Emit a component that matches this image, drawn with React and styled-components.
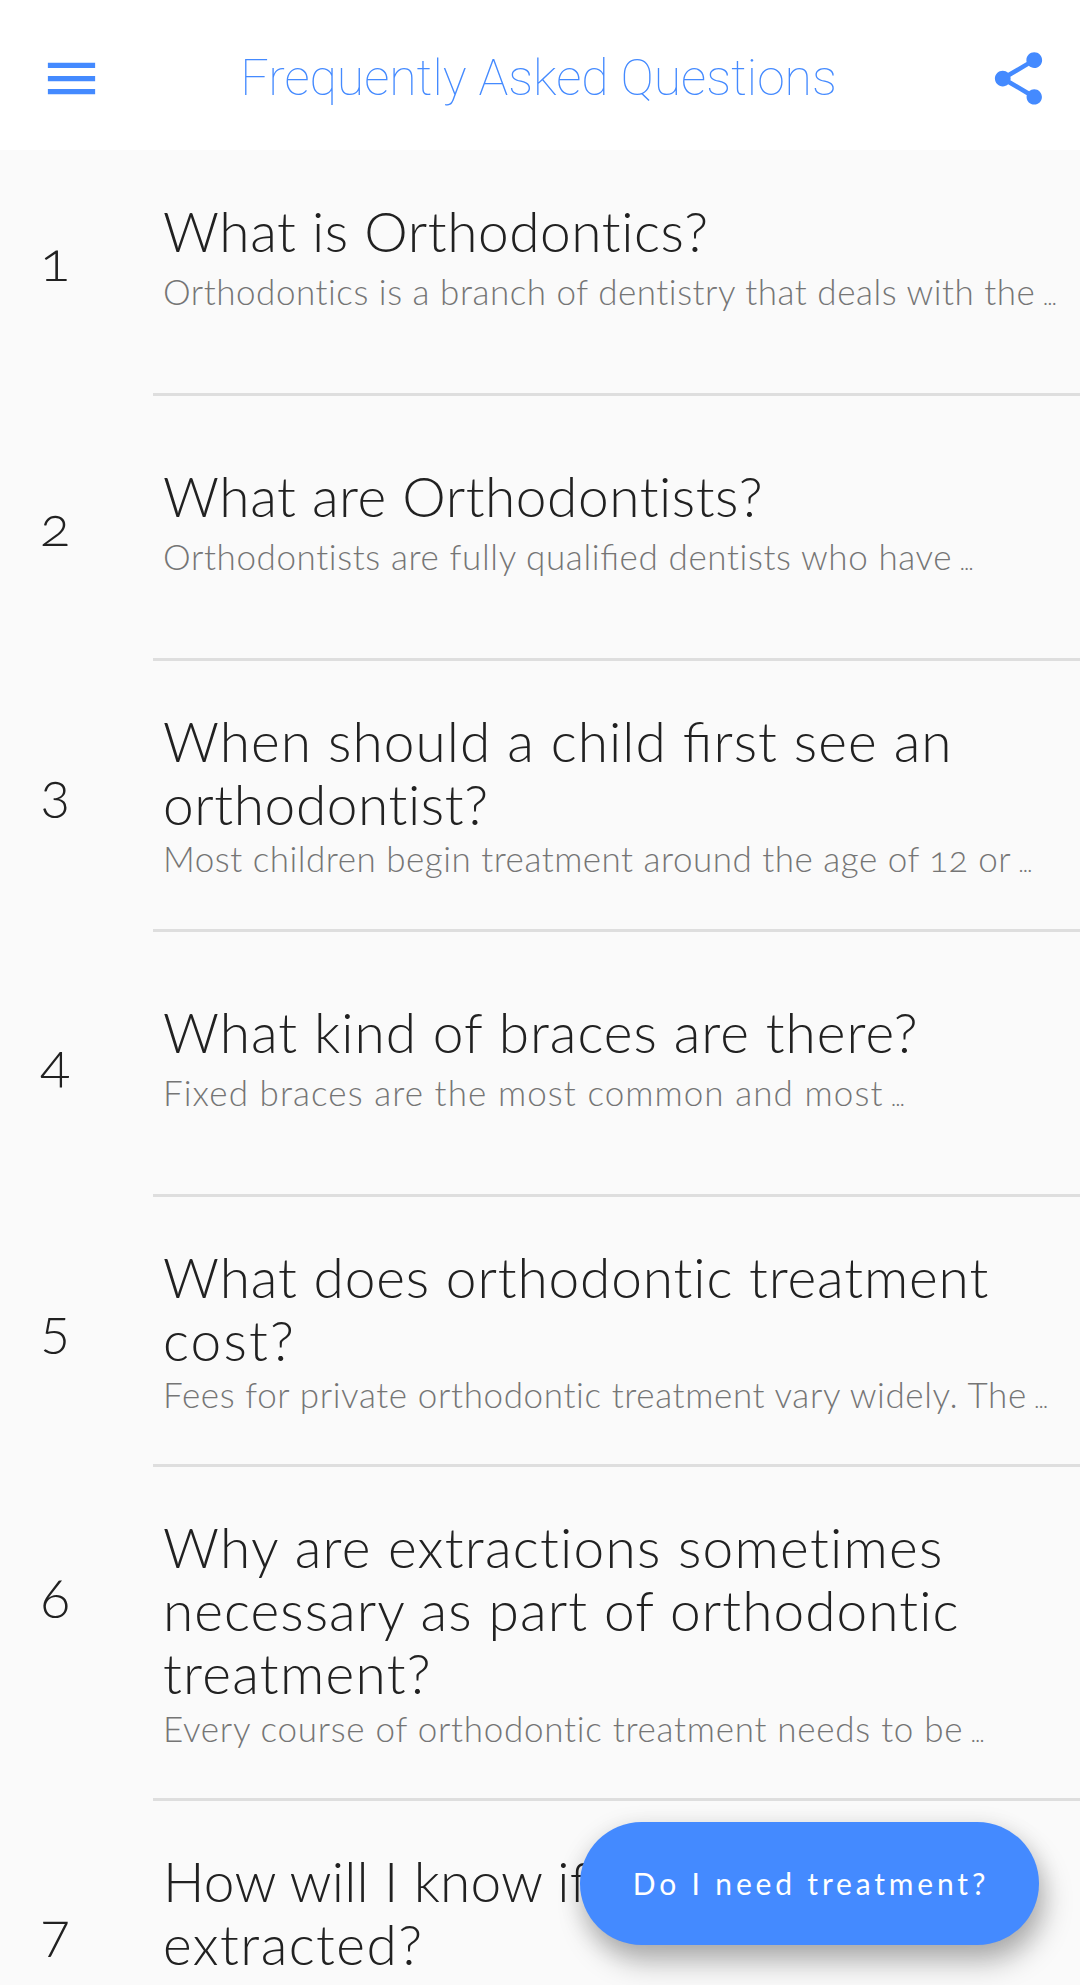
import React from 'react';
import styled, { createGlobalStyle } from 'styled-components';

const GlobalStyle = createGlobalStyle`
  body {
    margin: 0;
    background: #fafafa;
    font-family: Lato, "Liberation Sans", sans-serif;
  }
`;

const Screen = styled.div`
  width: 1080px;
  height: 1985px;
  overflow: hidden;
  position: relative;
  background: #fafafa;
`;

const Header = styled.header`
  position: relative;
  z-index: 1;
  box-sizing: border-box;
  height: 150px;
  padding: 6px 30px 0 40px;
  display: flex;
  align-items: center;
  justify-content: space-between;
  background: #fff;
  color: #448aff;
`;

const Title = styled.h1`
  margin: 0 13px 0 0;
  font: 100 49.9px/60px Roboto, sans-serif;
  white-space: nowrap;
`;

const IconButton = styled.button`
  width: 63px;
  height: 63px;
  padding: 0;
  border: 0;
  background: none;
  color: inherit;

  svg {
    display: block;
    width: 63px;
    height: 63px;
    fill: currentColor;
  }
`;

const List = styled.ol`
  margin: -19px 0 0;
  padding: 0;
  list-style: none;
`;

const Row = styled.li`
  display: flex;
  height: ${(p) => p.$height}px;
`;

const Index = styled.span`
  box-sizing: border-box;
  width: 153px;
  flex: none;
  padding: ${(p) => (p.$single ? 95 : 96)}px 0 0 40px;
  font-size: 56px;
  font-weight: 300;
  line-height: 67px;
  font-feature-settings: "onum";
  color: #212121;
`;

const Body = styled.div`
  box-sizing: border-box;
  flex: 1;
  padding: ${(p) => (p.$single ? 69 : 49)}px 0 0 10px;
  border-bottom: 3px solid #dedede;
`;

const Question = styled.h2`
  margin: 0 0 ${(p) => (p.$single ? 8 : 2)}px;
  font-size: 55px;
  font-weight: 300;
  line-height: 63.2px;
  color: #212121;
`;

const Line = styled.span`
  display: block;
  width: max-content;
  white-space: pre;
  letter-spacing: ${(p) => p.$track}px;
`;

const Answer = styled.p`
  margin: 0;
  display: flex;
  align-items: baseline;
  font-size: 35px;
  font-weight: 300;
  line-height: 40px;
  white-space: pre;
  color: #757575;
`;

const Snippet = styled.span`
  letter-spacing: ${(p) => p.$track}px;
  font-feature-settings: "onum";
`;

const Ligature = styled.i`
  font-style: normal;
  font-feature-settings: "liga";
`;

const More = styled.span`
  margin-left: 8px;
  font-size: 17px;
  font-weight: 400;
`;

const Fab = styled.button`
  position: absolute;
  right: 41px;
  bottom: 40px;
  width: 459px;
  height: 123px;
  padding: 0 0 2px 3px;
  border: 0;
  border-radius: 62px;
  background: #448aff;
  color: #fff;
  font: 400 30px/36px Lato, sans-serif;
  letter-spacing: 3.82px;
  white-space: nowrap;
  box-shadow: 6px 18px 28px rgba(0, 0, 0, 0.25), 0 5px 24px rgba(0, 0, 0, 0.13);
`;

const FAQS = [
  {
    height: 265,
    lines: [['What is Orthodontics?', 0.57]],
    answer: 'Orthodontics is a branch of dentistry that deals with the',
    track: 0.53,
  },
  {
    height: 265,
    lines: [['What are Orthodontists?', 0.55]],
    answer: 'Orthodontists are fully qualified dentists who have',
    track: 0.62,
  },
  {
    height: 271,
    lines: [['When should a child first see an', 1.03], ['orthodontist?', 0.6]],
    answer: 'Most children begin treatment around the age of 12 or',
    track: 0.51,
  },
  {
    height: 265,
    lines: [['What kind of braces are there?', 0.98]],
    answer: 'Fixed braces are the most common and most',
    track: 1.08,
  },
  {
    height: 270,
    lines: [['What does orthodontic treatment', 0.87], ['cost?', 2.2]],
    answer: 'Fees for private orthodontic treatment vary widely. The',
    track: 0.63,
  },
  {
    height: 334,
    lines: [
      ['Why are extractions sometimes', 1.27],
      ['necessary as part of orthodontic', 1.05],
      ['treatment?', 1.28],
    ],
    answer: 'Every course of orthodontic treatment needs to be',
    track: 0.73,
  },
  {
    height: 271,
    lines: [['How will I know if', 0.2], ['extracted?', 1.44]],
    answer: '',
    track: 0,
  },
];

// Letter-spacing switches ligatures off, so "fi" is joined explicitly.
const withLigatures = (text) =>
  text.split(/(fi)/).map((part, i) => (part === 'fi' ? <Ligature key={i}>fi</Ligature> : part));

function FaqRow({ number, faq }) {
  const single = faq.lines.length === 1;
  return (
    <Row $height={faq.height}>
      <Index $single={single}>{number}</Index>
      <Body $single={single}>
        <Question $single={single}>
          {faq.lines.map(([text, track]) => (
            <Line key={text} $track={track}>{withLigatures(text)}</Line>
          ))}
        </Question>
        {faq.answer && (
          <Answer>
            <Snippet $track={faq.track}>{withLigatures(faq.answer)}</Snippet>
            <More>…</More>
          </Answer>
        )}
      </Body>
    </Row>
  );
}

export default function App() {
  return (
    <Screen>
      <GlobalStyle />
      <Header>
        <IconButton aria-label="Menu">
          <svg viewBox="0 0 24 24"><path d="M3 18h18v-2H3v2zm0-5h18v-2H3v2zm0-7v2h18V6H3z" /></svg>
        </IconButton>
        <Title>Frequently Asked Questions</Title>
        <IconButton aria-label="Share">
          <svg viewBox="0 0 24 24"><path d="M18 16.08c-.76 0-1.44.3-1.96.77L8.91 12.7c.05-.23.09-.46.09-.7s-.04-.47-.09-.7l7.05-4.11c.54.5 1.25.81 2.04.81 1.66 0 3-1.34 3-3s-1.34-3-3-3-3 1.34-3 3c0 .24.04.47.09.7L8.04 9.81C7.5 9.31 6.79 9 6 9c-1.66 0-3 1.34-3 3s1.34 3 3 3c.79 0 1.5-.31 2.04-.81l7.12 4.16c-.05.21-.08.43-.08.65 0 1.61 1.31 2.92 2.92 2.92s2.92-1.31 2.92-2.92-1.31-2.92-2.92-2.92z" /></svg>
        </IconButton>
      </Header>
      <List>
        {FAQS.map((faq, i) => (
          <FaqRow key={i} number={i + 1} faq={faq} />
        ))}
      </List>
      <Fab>Do I need treatment?</Fab>
    </Screen>
  );
}
